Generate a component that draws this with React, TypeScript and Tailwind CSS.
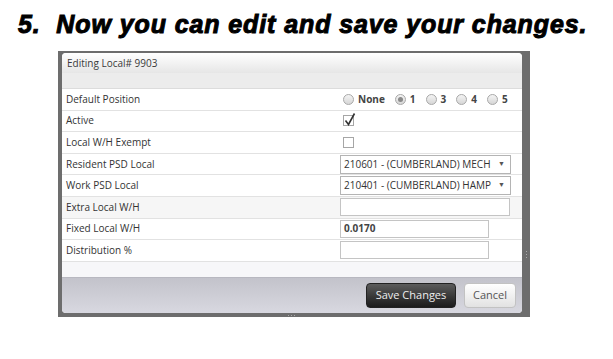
import React from 'react';

const labelFont = { fontFamily: '"Open Sans", "Liberation Sans", sans-serif' };

interface Row {
  label: string;
  control: React.ReactNode;
  shaded?: boolean;
}

const Radio: React.FC<{ label: string; checked?: boolean }> = ({ label, checked }) => (
  <span className="flex items-center gap-[4px] mr-[10px]">
    <span className="w-[11px] h-[11px] rounded-full border border-[#a8a8a8] bg-gradient-to-b from-[#f4f4f4] to-[#d6d6d6] flex items-center justify-center">
      {checked && <span className="w-[5px] h-[5px] rounded-full bg-[#8a8a8a]" />}
    </span>
    <span className="text-[10px] font-bold text-[#444]">{label}</span>
  </span>
);

const Checkbox: React.FC<{ checked?: boolean }> = ({ checked }) => (
  <span className="relative ml-[3px] w-[11px] h-[11px] border border-[#a6a6a6] bg-white block">
    {checked && (
      <svg className="absolute -top-[3px] left-0" width="12" height="13" viewBox="0 0 12 13">
        <path d="M1.5 7.5 L4.5 11.5 L10.5 0.5" fill="none" stroke="#333" strokeWidth="1.6" />
      </svg>
    )}
  </span>
);

// the reference shows the option text cut short by the box
const Select: React.FC<{ value: string }> = ({ value }) => (
  <div className="w-[171px] h-[19px] border border-[#b4b4b4] bg-white flex items-center justify-between pl-[3px] pr-[5px]">
    <span className="text-[10px] text-[#333] whitespace-nowrap">{value}</span>
    <span className="text-[7px] text-[#555]">▼</span>
  </div>
);

const Input: React.FC<{ value?: string; width: string }> = ({ value, width }) => (
  <div className={`${width} h-[18px] border border-[#c4c4c4] bg-white flex items-center pl-[3px]`}>
    <span className="text-[10px] font-bold text-[#444]">{value}</span>
  </div>
);

const rows: Row[] = [
  {
    label: 'Default Position',
    control: (
      <div className="flex items-center pl-[3px]">
        <Radio label="None" />
        <Radio label="1" checked />
        <Radio label="3" />
        <Radio label="4" />
        <Radio label="5" />
      </div>
    ),
  },
  { label: 'Active', control: <Checkbox checked /> },
  { label: 'Local W/H Exempt', control: <Checkbox /> },
  { label: 'Resident PSD Local', control: <Select value="210601 - (CUMBERLAND) MECH" /> },
  { label: 'Work PSD Local', control: <Select value="210401 - (CUMBERLAND) HAMP" /> },
  { label: 'Extra Local W/H', control: <Input width="w-[170px]" />, shaded: true },
  { label: 'Fixed Local W/H', control: <Input value="0.0170" width="w-[149px]" /> },
  { label: 'Distribution %', control: <Input width="w-[149px]" /> },
];

export default function App() {
  return (
    <div className="w-[613px] h-[359px] bg-white overflow-hidden" style={labelFont}>
      <div
        className="pl-[18px] pt-[12px] h-[51px] text-[25px] font-bold italic text-black whitespace-pre leading-none tracking-[0.9px] [-webkit-text-stroke:1px_black]"
        style={{ fontFamily: '"Liberation Sans", Arial, sans-serif' }}
      >
        {'5.  Now you can edit and save your changes.'}
      </div>

      <div className="ml-[58px] w-[472px] h-[266px] bg-[#6d6d6d] pt-[2px] pl-[4px] pr-[8px] pb-[4px] relative">
        <div className="w-[460px] h-[260px] bg-white rounded-[4px] overflow-hidden flex flex-col">
          <div className="h-[20px] bg-gradient-to-b from-white to-[#e6e6e6] flex items-center pl-[5px] text-[10px] text-[#3a3a3a]">
            Editing Local# 9903
          </div>
          <div className="h-[16px] bg-[#ececec] border-b border-[#dcdcdc]" />

          {rows.map((row) => (
            <div
              key={row.label}
              className={`h-[21.6px] flex items-center border-b border-[#e2e2e2] ${row.shaded ? 'bg-[#f6f6f6]' : 'bg-white'}`}
            >
              <div className="w-[278px] pl-[4px] text-[10px] text-[#333]">{row.label}</div>
              <div className="flex-1 flex items-center">{row.control}</div>
            </div>
          ))}

          <div className="h-[16px] bg-[#f7f7f9] border-b border-[#b8b8c0]" />
          <div className="flex-1 bg-gradient-to-b from-[#c3c3cb] to-[#d8d8e0] flex items-center justify-end gap-[8px] pr-[6px]">
            <button className="w-[90px] h-[25px] rounded-[4px] bg-gradient-to-b from-[#5c5c5c] to-[#1c1c1c] border border-[#222] text-[#eee] text-[11px]">
              Save Changes
            </button>
            <button className="w-[52px] h-[25px] rounded-[4px] bg-gradient-to-b from-white to-[#e2e2e2] border border-[#c2c2c2] text-[#555] text-[11px]">
              Cancel
            </button>
          </div>
        </div>
        <div className="absolute right-[3px] top-[200px] flex flex-col gap-[2px]">
          <span className="w-[1px] h-[1px] bg-[#aaa]" />
          <span className="w-[1px] h-[1px] bg-[#aaa]" />
          <span className="w-[1px] h-[1px] bg-[#aaa]" />
        </div>
        <div className="absolute bottom-[1px] left-[230px] flex gap-[2px]">
          <span className="w-[1px] h-[1px] bg-[#aaa]" />
          <span className="w-[1px] h-[1px] bg-[#aaa]" />
          <span className="w-[1px] h-[1px] bg-[#aaa]" />
        </div>
      </div>
    </div>
  );
}
